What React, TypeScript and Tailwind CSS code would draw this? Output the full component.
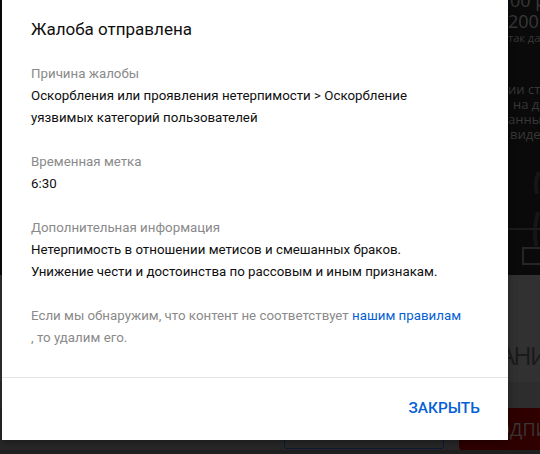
import React from "react";

const sections = [
  {
    label: "Причина жалобы",
    value: "Оскорбления или проявления нетерпимости > Оскорбление уязвимых категорий пользователей",
  },
  { label: "Временная метка", value: "6:30" },
  {
    label: "Дополнительная информация",
    value: "Нетерпимость в отношении метисов и смешанных браков.\nУнижение чести и достоинства по рассовым и иным признакам.",
  },
];

function BackgroundPage() {
  return (
    <div className="flex h-full w-full flex-col font-['Open_Sans',sans-serif]">
      {/* dark hero area, mostly hidden under the dialog */}
      <div className="flex h-[275px] shrink-0 bg-[#0a0a0a]">
        <div className="w-[508px] shrink-0" />
        <div className="flex flex-col whitespace-nowrap text-[#383838]">
          <span className="-mt-[11px] ml-[2px] text-[18px] leading-[22px]">00 р</span>
          <span className="text-[18px] leading-[20px]">200 р</span>
          <span className="text-[11px] leading-[14px]">так да</span>
          <span className="mt-[37px] text-[13px] leading-[15px]">ии ст</span>
          <span className="ml-[5px] text-[13px] leading-[15px]">на д</span>
          <span className="text-[13px] leading-[15px]">анным</span>
          <span className="ml-[2px] text-[13px] leading-[15px]">виде</span>
          <svg width="32" height="126" viewBox="0 0 32 126" className="mt-[2px]" fill="none">
            <path d="M31 28c-3 6-4 14-2 22M30 68c-3 10-4 22-2 34" stroke="#161616" strokeWidth="4" />
            <path d="M0 85h32" stroke="#1b1b1b" strokeWidth="2" />
            <rect x="15" y="104" width="22" height="16" stroke="#262626" strokeWidth="2" />
          </svg>
        </div>
      </div>
      {/* dimmed page */}
      <div className="flex flex-1 flex-col bg-[#313131]">
        <div className="flex h-[107px] shrink-0 items-end pb-[13px] pl-[474px]">
          <span className="whitespace-nowrap text-[25px] leading-[28px] tracking-[-2px] text-[#1a1a1a]">ХРАНИТЬ</span>
        </div>
        <div className="h-[26px] shrink-0 bg-[#2d2d2d]" />
        <div className="flex h-[42px] shrink-0 items-start bg-[#272727] pl-[284px]">
          <div className="h-[41px] w-[160px] shrink-0 rounded-[3px] border border-[#0d1a38]" />
          <div className="ml-[15px] flex h-[42px] min-w-0 flex-1 items-center overflow-hidden rounded-bl-[3px] bg-[#2e0000] pl-[24px]">
            <span className="whitespace-nowrap text-[18px] text-[#3a3636]">ПОДПИСАТЬСЯ</span>
          </div>
        </div>
        <div className="flex-1 bg-[#1f1f1f]" />
      </div>
    </div>
  );
}

export default function App() {
  return (
    <div className="relative h-[454px] w-[540px] overflow-hidden font-['Roboto',sans-serif]">
      <BackgroundPage />

      <div className="absolute left-[2px] top-0 flex h-[440px] w-[506px] flex-col bg-white shadow-[0_2px_8px_rgba(0,0,0,0.35)]">
        <div className="flex flex-col pl-[29px] pt-[18px]">
          <h2 className="text-[17px] leading-[22px] font-normal text-[#0f0f0f]">Жалоба отправлена</h2>

          <div className="mt-[23px] flex w-[438px] flex-col gap-[22px] text-[13.3px] leading-[22px]">
            {sections.map((s) => (
              <div key={s.label}>
                <div className="text-[#8a8a8a]">{s.label}</div>
                <div className="whitespace-pre-line text-[#0f0f0f]">{s.value}</div>
              </div>
            ))}
            <p className="text-[#8a8a8a]">
              Если мы обнаружим, что контент не соответствует{" "}
              <a href="#" className="whitespace-nowrap text-[#065fd4] no-underline">нашим правилам</a>
              <br />, то удалим его.
            </p>
          </div>
        </div>

        <div className="mt-auto flex h-[63px] items-center justify-end border-t border-[#e5e5e5] pr-[28px]">
          <button className="text-[15.4px] font-medium text-[#065fd4]">ЗАКРЫТЬ</button>
        </div>
      </div>
    </div>
  );
}
